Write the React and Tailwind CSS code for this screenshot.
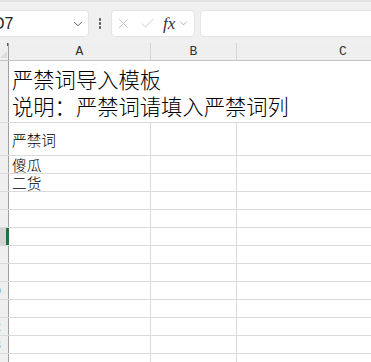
import React from 'react';
import { Check, ChevronDown, X } from 'lucide-react';

const ROWS = [
  { n: 1, h: 'h-[62px]', title: true },
  { n: 2, h: 'h-[33px]', text: '严禁词', center: true },
  { n: 3, h: 'h-[18px]', text: '傻瓜' },
  { n: 4, h: 'h-[18px]', text: '二货' },
  { n: 5, h: 'h-[18px]' },
  { n: 6, h: 'h-[18px]' },
  { n: 7, h: 'h-[18px]', selected: true },
  { n: 8, h: 'h-[18px]' },
  { n: 9, h: 'h-[18px]' },
  { n: 10, h: 'h-[18px]' },
  { n: 11, h: 'h-[18px]' },
  { n: 12, h: 'h-[18px]' },
  { n: 13, h: 'h-[18px]' },
  { n: 14, h: 'h-[18px]' },
];

const cjk = { fontFamily: '"Noto Sans CJK SC", "Liberation Sans", sans-serif' };

function RowHeader({ n, selected }) {
  return (
    <div
      className={`w-[9px] shrink-0 flex items-center overflow-hidden ${
        selected ? 'bg-[#d4d4d4] border-r-[3px] border-[#1f7244]' : 'bg-[#efefef] border-r border-[#a0a0a0]'
      }`}
    >
      <div className="w-[30px] -ml-[21px] shrink-0 text-center text-[12px] leading-none text-[#333]">{n}</div>
    </div>
  );
}

export default function App() {
  return (
    <div
      className="w-[371px] h-[362px] overflow-hidden bg-white"
      style={{ fontFamily: '"Liberation Sans", "Noto Sans CJK SC", sans-serif' }}
    >
      {/* formula bar */}
      <div className="h-[43px] bg-[#f0f0f0] border-t-[2px] border-[#e2e2e2] flex items-start pt-[8px]">
        <div className="-ml-[14px] w-[103px] h-[27px] shrink-0 bg-white rounded-[4px] border border-[#e4e4e4] flex items-center justify-between pl-[6px] pr-[3px]">
          <span className="text-[16px] text-[#222]">D7</span>
          <ChevronDown size={14} strokeWidth={1.6} className="text-[#555]" />
        </div>
        <div className="w-[22px] h-[27px] shrink-0 flex flex-col items-center justify-center gap-[1.5px]">
          <span className="w-[2.5px] h-[2.5px] bg-[#555] rounded-full" />
          <span className="w-[2.5px] h-[2.5px] bg-[#555] rounded-full" />
          <span className="w-[2.5px] h-[2.5px] bg-[#555] rounded-full" />
        </div>
        <div className="w-[84px] h-[27px] shrink-0 bg-white rounded-[4px] border border-[#e4e4e4] flex items-center pl-[3px]">
          <X size={17} strokeWidth={1.1} className="text-[#bdbdbd]" />
          <Check size={17} strokeWidth={1.1} className="text-[#bdbdbd] ml-[7px]" />
          <span
            className="ml-[7px] text-[17px] italic text-[#333] leading-none"
            style={{ fontFamily: '"Liberation Serif", serif' }}
          >
            fx
          </span>
          <ChevronDown size={11} strokeWidth={1.4} className="text-[#888] ml-[3px]" />
        </div>
        <div className="ml-[5px] w-[200px] h-[27px] shrink-0 bg-white rounded-[4px] border border-[#e4e4e4]" />
      </div>

      {/* column headers */}
      <div
        className="h-[18px] flex bg-[#efefef] border-b border-[#c4c4c4] text-[13px] text-[#333]"
        style={{ fontFamily: '"Liberation Mono", monospace' }}
      >
        <div className="w-[9px] shrink-0 border-r border-[#a0a0a0] flex items-end">
          <svg width="8" height="17" viewBox="0 0 8 17">
            <path d="M0 15 L7 8 L7 15 Z" fill="#dcdcdc" />
            <rect x="7.2" y="0" width="0.8" height="3" fill="#333" />
          </svg>
        </div>
        <div className="w-[142px] shrink-0 border-r border-[#d6d6d6] flex items-center justify-center">A</div>
        <div className="w-[86px] shrink-0 border-r border-[#d6d6d6] flex items-center justify-center">B</div>
        <div className="w-[212px] shrink-0 flex items-center justify-center">C</div>
      </div>

      {/* grid */}
      <div className="flex flex-col">
        {ROWS.map((r) => (
          <div key={r.n} className={`${r.h} shrink-0 flex border-b border-[#dadada]`}>
            <RowHeader n={r.n} selected={r.selected} />
            {r.title ? (
              <div
                className="w-[440px] shrink-0 flex flex-col justify-center pl-[3px] text-[21.3px] leading-[27px] font-light text-black"
                style={cjk}
              >
                <div className="whitespace-nowrap">严禁词导入模板</div>
                <div className="whitespace-nowrap">说明：严禁词请填入严禁词列</div>
              </div>
            ) : (
              <>
                <div
                  className={`w-[142px] shrink-0 border-r border-[#dadada] flex ${
                    r.center ? 'items-center' : 'items-end'
                  } pl-[3px] text-[14.67px] leading-[17px] font-light text-black whitespace-nowrap`}
                  style={cjk}
                >
                  {r.text}
                </div>
                <div className="w-[86px] shrink-0 border-r border-[#dadada]" />
                <div className="w-[212px] shrink-0" />
              </>
            )}
          </div>
        ))}
      </div>
    </div>
  );
}
